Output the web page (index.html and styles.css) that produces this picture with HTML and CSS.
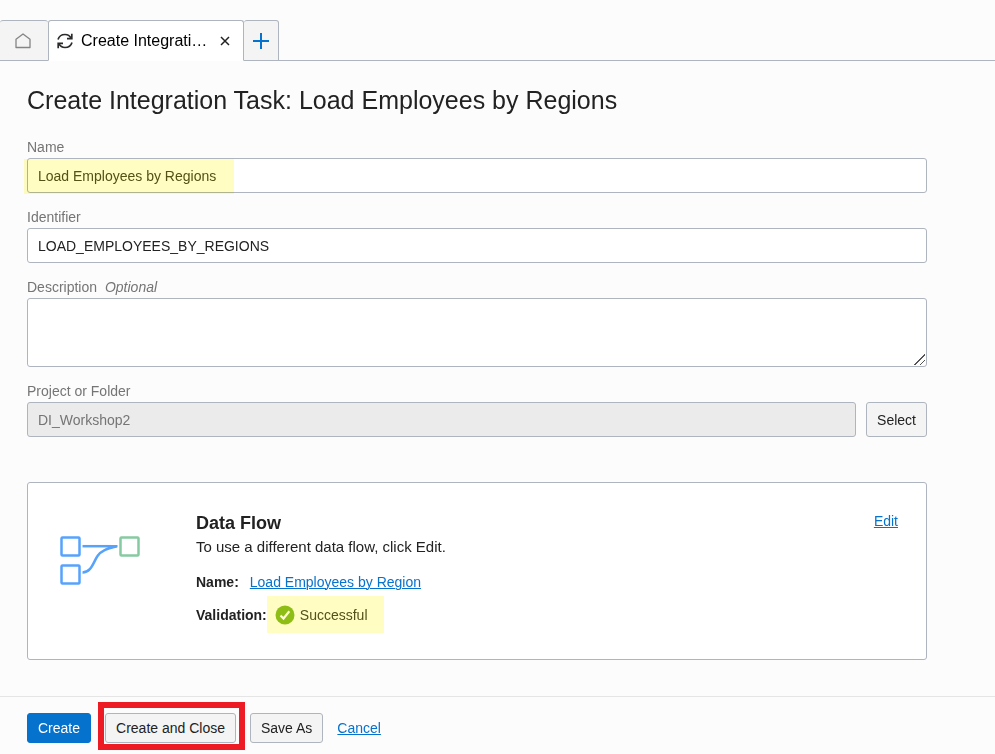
FILE: index.html
```html
<!DOCTYPE html>
<html lang="en">
<head>
<meta charset="utf-8">
<meta name="viewport" content="width=device-width, initial-scale=1">
<title>Create Integration Task</title>
<link rel="stylesheet" href="styles.css">
</head>
<body>
<nav class="tabs" aria-label="Open tabs">
  <button class="tab tab-home" type="button" aria-label="Home">
    <svg width="16" height="16" viewBox="0 0 16 16" fill="none" stroke="#858585" stroke-width="1.3" stroke-linejoin="round"><path d="M1 6.200 8 1l7 5.200V14.500H1z"/></svg>
  </button>
  <div class="tab tab-active">
    <svg width="16" height="16" viewBox="0 0 16 16" fill="none" stroke="#2b2b2b" stroke-width="1.7"><path d="M1 6.500C2 3.300 4.700 1.500 8 1.500c2.700 0 5 1.500 6.200 3.800M14.800.8v4.900H10M15 9.500c-1 3.200-3.700 5-7 5-2.700 0-5-1.500-6.200-3.800M1.200 15.200v-4.900H6"/></svg>
    <span class="tab-title">Create Integrati…</span>
    <button class="tab-close" type="button" aria-label="Close tab">
      <svg width="10" height="10" viewBox="0 0 10 10" fill="none" stroke="#222" stroke-width="1.5"><path d="m1 1 8 8M9 1 1 9"/></svg>
    </button>
  </div>
  <button class="tab tab-add" type="button" aria-label="New tab">
    <svg width="16" height="16" viewBox="0 0 16 16" fill="none" stroke="#0572ce" stroke-width="2"><path d="M8 0v16M0 8h16"/></svg>
  </button>
</nav>
<main class="page">
  <h1 class="title">Create Integration Task: Load Employees by Regions</h1>
  <form class="form" id="task">
    <div class="field">
      <label for="name">Name</label>
      <div class="marked-box"><input class="control" id="name" type="text" value="Load Employees by Regions"></div>
    </div>
    <div class="field">
      <label for="identifier">Identifier</label>
      <input class="control" id="identifier" type="text" value="LOAD_EMPLOYEES_BY_REGIONS">
    </div>
    <div class="field">
      <label for="description">Description <em class="optional">Optional</em></label>
      <textarea class="control control-area" id="description"></textarea>
    </div>
    <div class="field">
      <label for="folder">Project or Folder</label>
      <div class="picker">
        <input class="control" id="folder" type="text" value="DI_Workshop2" disabled>
        <button class="button" type="button">Select</button>
      </div>
    </div>
  </form>
  <section class="card">
    <svg class="flow-icon" width="80" height="50" viewBox="0 0 80 50" fill="none" stroke="#57a2fb" stroke-width="2.500"><rect x="1.500" y="1.500" width="18" height="18" rx="1"/><rect x="1.500" y="29.500" width="18" height="18" rx="1"/><path d="M22.500 10.200h29"/><path d="M57 10.300C46 13 40.500 15 37.500 20 33 27 31 36.600 22.500 36.600"/><path d="M49 9h8.500v2L47 13.500z" fill="#57a2fb" stroke="none"/><rect x="60.500" y="1.500" width="18" height="18" rx="1" stroke="#85caa0"/></svg>
    <div class="details">
      <h2 class="card-title">Data Flow</h2>
      <p class="hint">To use a different data flow, click Edit.</p>
      <div class="row"><b>Name:</b><a class="flow-link" href="#flow">Load Employees by Region</a></div>
      <div class="row"><b>Validation:</b><span class="status"><svg width="20" height="20" viewBox="0 0 20 20"><circle cx="10" cy="10" r="9.500" fill="#8ebd16"/><path d="m5.500 10.500 3 3 5.800-7.300" fill="none" stroke="#fffdd0" stroke-width="2.200"/></svg>Successful</span></div>
    </div>
    <a href="#edit">Edit</a>
  </section>
</main>
<footer class="actions">
  <button class="button button-primary" type="submit" form="task">Create</button>
  <span class="callout"><button class="button" type="button">Create and Close</button></span>
  <button class="button" type="button">Save As</button>
  <a href="#cancel">Cancel</a>
</footer>
</body>
</html>
```
FILE: styles.css
```css
* { box-sizing: border-box; }

body {
  margin: 0;
  min-height: 100vh;
  display: flex;
  flex-direction: column;
  background: #fcfcfc;
  color: #222;
  font: 14px/20px "Liberation Sans", Arial, sans-serif;
}

button, input, textarea { font: inherit; color: inherit; }
a { color: #0572ce; text-decoration-thickness: 1px; text-underline-offset: 1px; }

.tabs {
  display: flex;
  height: 61px;
  padding-top: 20px;
  border-bottom: 1px solid #afb5be;
}

.tab {
  display: flex;
  align-items: center;
  justify-content: center;
  height: 41px;
  padding: 0;
  border: 1px solid #afb5be;
  border-radius: 3px 3px 0 0;
  background: #f4f4f4;
}

.tab-home { width: 48px; padding-right: 2px; border-left: 0; border-right: 0; }
.tab-add { width: 35px; border-left: 0; }

.tab-active {
  width: 196px;
  padding: 0 13px 0 8px;
  border-bottom-color: #fff;
  background: #fff;
  color: #000;
  font-size: 16px;
}

.tab-title {
  flex: 1;
  margin-left: 8px;
  white-space: nowrap;
}

.tab-close {
  display: flex;
  padding: 0;
  border: 0;
  background: none;
}

.page { flex: 1; padding: 19px 27px 36px; }

.title {
  margin: 0 0 16px;
  font-size: 25px;
  line-height: 40px;
  font-weight: 400;
}

.form, .card { max-width: 900px; }
.form { display: grid; gap: 13px; }
.field { display: flex; flex-direction: column; }
.field label { color: #757575; line-height: 22px; }
.optional { margin-left: 4px; }

.control {
  display: block;
  width: 100%;
  height: 35px;
  padding: 0 10px;
  border: 1px solid #afb5be;
  border-radius: 3px;
  background: #fff;
}

.control:disabled { background: #ebebeb; color: #757575; }
.control-area { height: 69px; padding: 8px 10px; resize: vertical; }

.control-area::-webkit-resizer {
  background: linear-gradient(135deg, transparent 49%, #555 49% 55%, transparent 55% 74%, #555 74% 80%, transparent 80%) right 1px bottom 1px / 11px 11px no-repeat;
}

.marked-box { position: relative; }

/* Highlighter stroke over the task name */
.marked-box::after {
  content: "";
  position: absolute;
  left: -3px;
  top: 1px;
  width: 210px;
  height: 35px;
  background: #fffdc2;
  mix-blend-mode: multiply;
  pointer-events: none;
}

.marked-box .control { color: #54521a; }
.picker { display: flex; gap: 10px; }
.picker .control { flex: 1; min-width: 0; }

.button {
  min-height: 30px;
  padding: 0 10px;
  border: 1px solid #afb5be;
  border-radius: 3px;
  background: #f4f4f4;
  white-space: nowrap;
}

.button-primary { border-color: #0572ce; background: #0572ce; color: #fff; }

.card {
  display: flex;
  align-items: flex-start;
  margin-top: 45px;
  padding: 28px 28px 26px 32px;
  border: 1px solid #afb5be;
  border-radius: 3px;
  background: #fff;
}

.flow-icon { flex: none; margin: 25px 56px 0 0; }
.details { flex: 1; }
.card-title { margin: 0; font-size: 18px; line-height: 24px; }
.hint { margin: 0 0 8px; font-size: 15px; line-height: 24px; }
.row { display: flex; align-items: center; min-height: 29px; }
.flow-link { margin-left: 11px; }

.status {
  display: flex;
  align-items: center;
  gap: 5px;
  height: 37px;
  padding: 0 16px 0 8px;
  background: #fffdc2;
  color: #54521a;
}

.actions {
  display: flex;
  align-items: center;
  gap: 14px;
  padding: 16px 27px 11px;
  border-top: 1px solid #e5e5e5;
}

.callout { position: relative; display: flex; }

/* Red frame drawn round the highlighted action */
.callout::after {
  content: "";
  position: absolute;
  inset: -11px -9px -7px -7px;
  border: 6px solid #ed1c24;
  pointer-events: none;
}
```
